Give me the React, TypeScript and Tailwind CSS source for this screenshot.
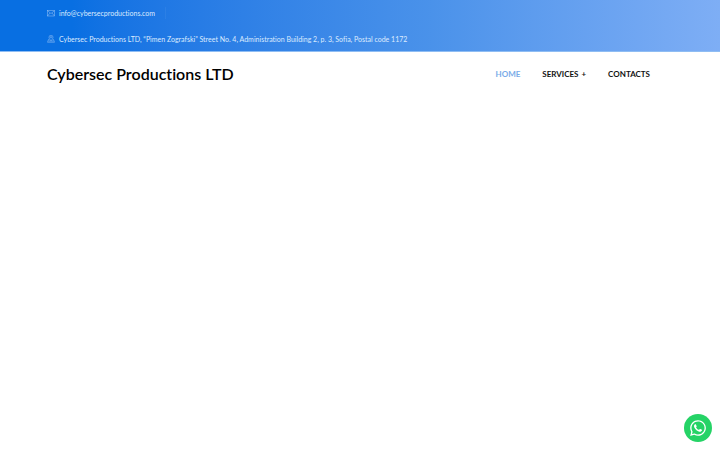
import React from 'react';
import { FaWhatsapp } from 'react-icons/fa';

const NAV_ITEMS = [
  { label: 'HOME', href: '#home', active: true, hasMenu: false },
  { label: 'SERVICES', href: '#services', active: false, hasMenu: true },
  { label: 'CONTACTS', href: '#contacts', active: false, hasMenu: false },
];

const EnvelopeIcon: React.FC = () => (
  <svg viewBox="0 0 16 16" className="w-2 h-2 shrink-0 opacity-70" fill="none" stroke="currentColor" aria-hidden="true">
    <rect x="1" y="3" width="14" height="11" />
    <path d="M1 3.5l7 5.5 7-5.5M1 14l5-6M15 14l-5-6" />
  </svg>
);

const LocationIcon: React.FC = () => (
  <svg viewBox="0 0 16 16" className="w-2 h-2 shrink-0 opacity-70" fill="none" stroke="currentColor" aria-hidden="true">
    <path d="M8 11.5C5.5 8.5 4 6.5 4 4.5a4 4 0 0 1 8 0c0 2-1.5 4-4 7z" />
    <circle cx="8" cy="4.5" r="1.5" />
    <path d="M4.5 9H3l-2 5.500h14L13 9h-1.500M3 12h10" />
  </svg>
);

const TopBar: React.FC = () => (
  <div className="bg-linear-to-r from-[#086fe2] from-10% via-[#4a92ea] via-60% to-[#7eaef5] border-b border-[#8fbdf3] text-[#dcebff] text-[7px] leading-[12px]">
    <address className="not-italic px-[47px] pt-[7px] pb-[6px] flex flex-col items-start gap-[14px]">
      <a
        href="mailto:info@cybersecproductions.com"
        className="flex items-center gap-1 pr-[10px] border-r border-white/5"
      >
        <EnvelopeIcon />
        info@cybersecproductions.com
      </a>
      <p className="flex items-center gap-1">
        <LocationIcon />
        Cybersec Productions LTD, “Pimen Zografski” Street No. 4, Administration Building 2, p. 3, Sofia, Postal code 1172
      </p>
    </address>
  </div>
);

const Header: React.FC = () => (
  <header className="flex items-center justify-between pl-[47px] pr-[70px] h-[44px]">
    <a href="#home" className="text-[16px] leading-[24px] font-semibold text-black">
      Cybersec Productions LTD
    </a>
    <nav className="flex items-center gap-[22px] text-[8px] leading-[12px] font-bold">
      {NAV_ITEMS.map((item) => (
        <a
          key={item.label}
          href={item.href}
          className={item.active ? 'text-[#78abe8]' : 'text-[#111111]'}
        >
          {item.label}
          {item.hasMenu && <span className="ml-[3px]">+</span>}
        </a>
      ))}
    </nav>
  </header>
);

const App: React.FC = () => {
  return (
    <div className="min-h-screen bg-white font-['Lato',sans-serif] [font-variant-ligatures:none]">
      <TopBar />
      <Header />
      <main />
      <a
        href="#whatsapp"
        aria-label="WhatsApp"
        className="fixed right-2 bottom-2 w-7 h-7 rounded-full bg-[#25d366] text-white flex items-center justify-center"
      >
        <FaWhatsapp size={18} />
      </a>
    </div>
  );
};

export default App;
